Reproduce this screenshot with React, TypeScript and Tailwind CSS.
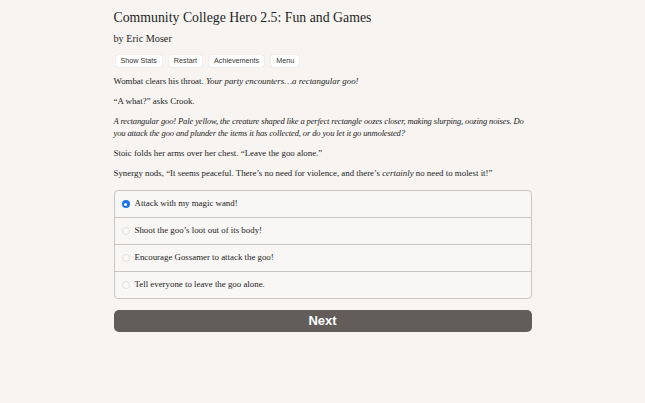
import React, { useState } from 'react';

const choices = [
  'Attack with my magic wand!',
  "Shoot the goo\u2019s loot out of its body!",
  'Encourage Gossamer to attack the goo!',
  'Tell everyone to leave the goo alone.',
];

const navButtons = ['Show Stats', 'Restart', 'Achievements', 'Menu'];

const App: React.FC = () => {
  const [selected, setSelected] = useState(0);

  return (
    <div className="min-h-[403px] w-full bg-[#f7f4f1] text-[#232323]" style={{ fontFamily: '"Liberation Serif", serif' }}>
      <div className="mx-auto w-[418px] pt-[9px]">
        {/* Header */}
        <h1 className="text-[13.8px] leading-[18px] text-[#1f1f1f]">Community College Hero 2.5: Fun and Games</h1>
        <h2 className="mt-[5px] text-[10.2px] leading-[14px] text-[#1f1f1f]">by Eric Moser</h2>

        <div className="mt-[9px] flex gap-[7px] pl-[2px]">
          {navButtons.map(label => (
            <button
              key={label}
              className="h-[12px] rounded-[2px] bg-white px-[5px] text-[7.2px] leading-[12px] text-[#333] shadow-[0_0_1px_rgba(0,0,0,0.25)]"
              style={{ fontFamily: '"Liberation Sans", sans-serif' }}
            >
              {label}
            </button>
          ))}
        </div>

        {/* Story text */}
        <div className="mt-[8px] flex flex-col gap-[8px] text-[8.85px] leading-[12px]">
          <p>Wombat clears his throat. <i>Your party encounters{'\u2026'}a rectangular goo!</i></p>
          <p>{'\u201C'}A what?{'\u201D'} asks Crook.</p>
          <p className="text-[8.5px] tracking-[-0.12px]">
            <i>
              A rectangular goo! Pale yellow, the creature shaped like a perfect rectangle oozes closer, making slurping, oozing noises. Do you attack the goo and plunder the items it has collected, or do you let it go unmolested?
            </i>
          </p>
          <p>Stoic folds her arms over her chest. {'\u201C'}Leave the goo alone.{'\u201D'}</p>
          <p>
            Synergy nods, {'\u201C'}It seems peaceful. There{'\u2019'}s no need for violence, and there{'\u2019'}s <i>certainly</i> no need to molest it!{'\u201D'}
          </p>
        </div>

        {/* Choices */}
        <div className="mt-[11px] overflow-hidden rounded-[4px] border border-[#c9c5c1] bg-[#f9f7f5]">
          {choices.map((choice, i) => (
            <label
              key={choice}
              className={`flex cursor-pointer items-center gap-[5px] pl-[7px] text-[8.85px] ${i > 0 ? 'h-[27px] border-t border-[#c9c5c1]' : 'h-[26px]'}`}
            >
              <span
                onClick={() => setSelected(i)}
                className={`flex h-[8px] w-[8px] items-center justify-center rounded-full ${
                  selected === i ? 'bg-[#1a73e8]' : 'border border-[#e2dfdc] bg-[#fbfaf9]'
                }`}
              >
                {selected === i && <span className="h-[3px] w-[3px] rounded-full bg-white" />}
              </span>
              <span onClick={() => setSelected(i)}>{choice}</span>
            </label>
          ))}
        </div>

        {/* Next */}
        <button
          className="mt-[11px] h-[22px] w-full rounded-[5px] bg-[#625d5a] text-[13px] font-bold text-white"
          style={{ fontFamily: '"Liberation Sans", sans-serif' }}
        >
          Next
        </button>
      </div>
    </div>
  );
};

export default App;
